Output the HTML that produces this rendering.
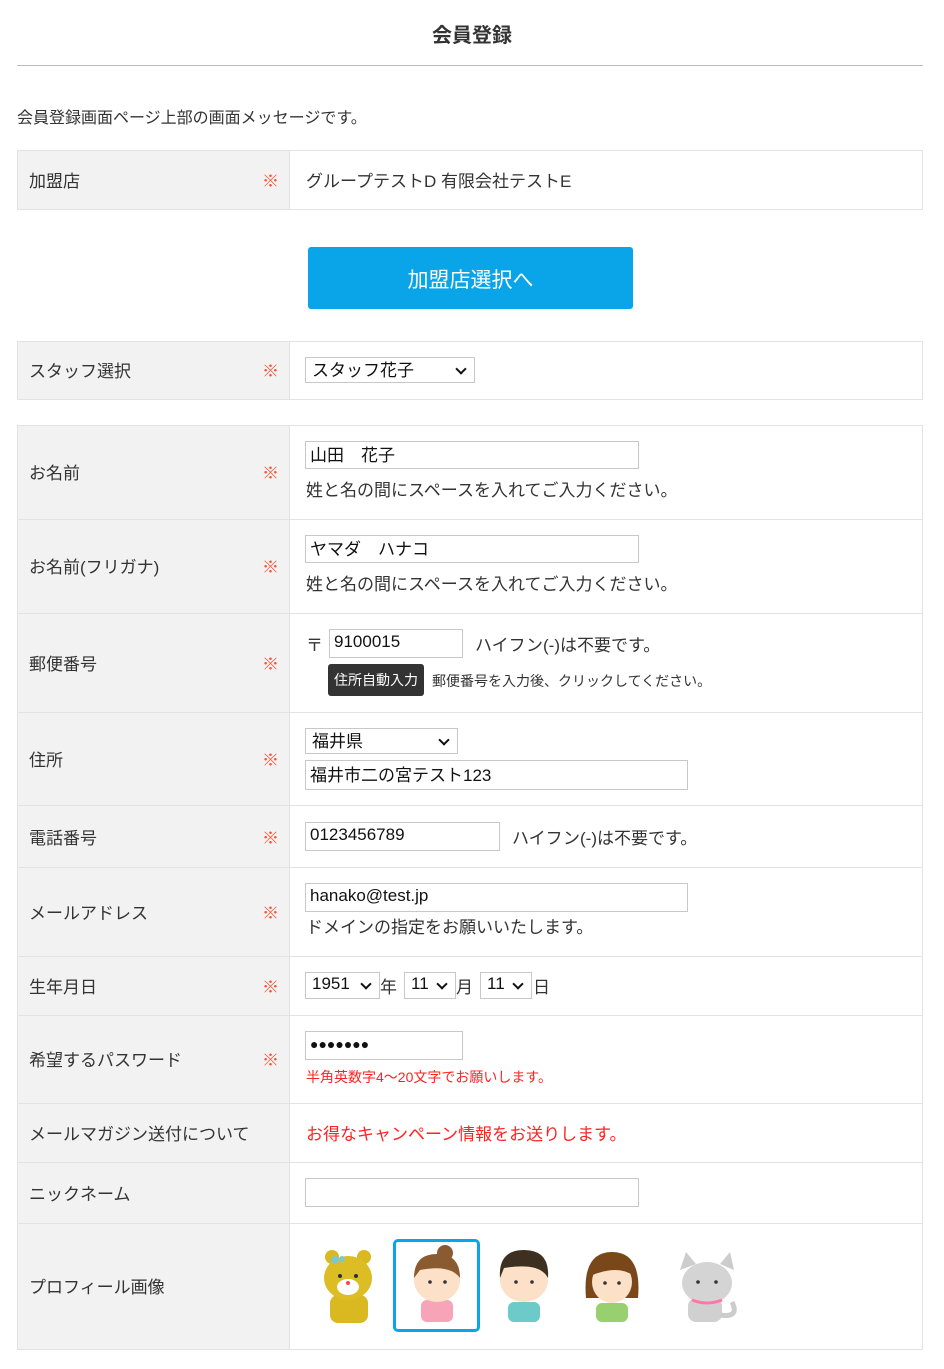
<!DOCTYPE html>
<html><head><meta charset="utf-8"><style>
*{box-sizing:border-box;margin:0;padding:0}
body{width:944px;height:1369px;background:#fff;position:relative;font-family:"Liberation Sans","Noto Sans CJK JP",sans-serif;color:#333;font-size:17px;overflow:hidden}
.a{position:absolute;white-space:nowrap}
.lab{position:absolute;left:17px;width:273px;background:#f2f2f2;border:1px solid #e3e3e3}
.con{position:absolute;left:289px;width:634px;border:1px solid #e3e3e3;background:#fff}
.lt{position:absolute;left:29px;font-size:17px;color:#333;line-height:20px;margin-top:2px}
.req{position:absolute;left:262px;color:#ff4a2a;font-size:17px;line-height:20px;margin-top:2px}
.b,.sel{position:absolute;border:1px solid #c8c8c8;background:#fff;font-size:17px;color:#111;display:flex;align-items:center;padding-bottom:3px}
.b{padding-left:4px}
.sel{padding-left:6px}
.sel:after{content:"";position:absolute;right:9px;top:7px;width:6px;height:6px;border-right:2px solid #111;border-bottom:2px solid #111;transform:rotate(45deg)}
.t{position:absolute;line-height:20px;white-space:nowrap;margin-top:2px}
</style></head><body>
<div class="a" style="left:0;width:944px;text-align:center;top:19px;font-size:20px;font-weight:bold;color:#333">会員登録</div>
<div class="a" style="left:17px;width:906px;top:65px;border-top:1px solid #bbb"></div>
<div class="t" style="left:17px;top:107px;font-size:16px">会員登録画面ページ上部の画面メッセージです。</div>

<div class="lab" style="top:150px;height:60px"></div><div class="con" style="top:150px;height:60px"></div>
<div class="lt" style="top:170px">加盟店</div><div class="req" style="top:170px">※</div>
<div class="t" style="left:306px;top:170px">グループテストD 有限会社テストE</div>

<div class="a" style="left:308px;top:247px;width:325px;height:62px;background:#0aa5e9;border-radius:3px;color:#fff;font-size:21px;text-align:center;line-height:62px;padding-top:3px">加盟店選択へ</div>

<div class="lab" style="top:341px;height:59px"></div><div class="con" style="top:341px;height:59px"></div>
<div class="lt" style="top:360px">スタッフ選択</div><div class="req" style="top:360px">※</div>
<div class="sel" style="left:305px;top:357px;width:170px;height:26px">スタッフ花子</div>

<div class="lab" style="top:425px;height:925px"></div><div class="con" style="top:425px;height:925px"></div>
<div class="a" style="left:17px;width:906px;top:519px;border-top:1px solid #e3e3e3"></div>
<div class="a" style="left:17px;width:906px;top:613px;border-top:1px solid #e3e3e3"></div>
<div class="a" style="left:17px;width:906px;top:712px;border-top:1px solid #e3e3e3"></div>
<div class="a" style="left:17px;width:906px;top:805px;border-top:1px solid #e3e3e3"></div>
<div class="a" style="left:17px;width:906px;top:867px;border-top:1px solid #e3e3e3"></div>
<div class="a" style="left:17px;width:906px;top:956px;border-top:1px solid #e3e3e3"></div>
<div class="a" style="left:17px;width:906px;top:1015px;border-top:1px solid #e3e3e3"></div>
<div class="a" style="left:17px;width:906px;top:1103px;border-top:1px solid #e3e3e3"></div>
<div class="a" style="left:17px;width:906px;top:1162px;border-top:1px solid #e3e3e3"></div>
<div class="a" style="left:17px;width:906px;top:1223px;border-top:1px solid #e3e3e3"></div>

<div class="lt" style="top:462px">お名前</div><div class="req" style="top:462px">※</div>
<div class="b" style="left:305px;top:441px;width:334px;height:28px">山田　花子</div>
<div class="t" style="left:306px;top:479px">姓と名の間にスペースを入れてご入力ください。</div>

<div class="lt" style="top:556px">お名前(フリガナ)</div><div class="req" style="top:556px">※</div>
<div class="b" style="left:305px;top:535px;width:334px;height:28px">ヤマダ　ハナコ</div>
<div class="t" style="left:306px;top:573px">姓と名の間にスペースを入れてご入力ください。</div>

<div class="lt" style="top:653px">郵便番号</div><div class="req" style="top:653px">※</div>
<div class="t" style="left:306px;top:634px">〒</div>
<div class="b" style="left:329px;top:629px;width:134px;height:29px">9100015</div>
<div class="t" style="left:475px;top:634px">ハイフン(-)は不要です。</div>
<div class="a" style="left:328px;top:664px;width:96px;height:32px;background:#333;border-radius:3px;color:#fff;font-size:14px;line-height:32px;text-align:center">住所自動入力</div>
<div class="t" style="left:432px;top:669px;font-size:14px">郵便番号を入力後、クリックしてください。</div>

<div class="lt" style="top:749px">住所</div><div class="req" style="top:749px">※</div>
<div class="sel" style="left:305px;top:728px;width:153px;height:26px">福井県</div>
<div class="b" style="left:305px;top:760px;width:383px;height:30px">福井市二の宮テスト123</div>

<div class="lt" style="top:827px">電話番号</div><div class="req" style="top:827px">※</div>
<div class="b" style="left:305px;top:822px;width:195px;height:29px">0123456789</div>
<div class="t" style="left:512px;top:827px">ハイフン(-)は不要です。</div>

<div class="lt" style="top:902px">メールアドレス</div><div class="req" style="top:902px">※</div>
<div class="b" style="left:305px;top:883px;width:383px;height:29px">hanako@test.jp</div>
<div class="t" style="left:306px;top:916px">ドメインの指定をお願いいたします。</div>

<div class="lt" style="top:976px">生年月日</div><div class="req" style="top:976px">※</div>
<div class="sel" style="left:305px;top:972px;width:75px;height:27px">1951</div>
<div class="t" style="left:380px;top:976px">年</div>
<div class="sel" style="left:404px;top:972px;width:52px;height:27px">11</div>
<div class="t" style="left:456px;top:976px">月</div>
<div class="sel" style="left:480px;top:972px;width:52px;height:27px">11</div>
<div class="t" style="left:533px;top:976px">日</div>

<div class="lt" style="top:1049px">希望するパスワード</div><div class="req" style="top:1049px">※</div>
<div class="b" style="left:305px;top:1031px;width:158px;height:29px;font-size:14px">●●●●●●●</div>
<div class="t" style="left:306px;top:1065px;font-size:14px;color:#f22">半角英数字4～20文字でお願いします。</div>

<div class="lt" style="top:1123px">メールマガジン送付について</div>
<div class="t" style="left:306px;top:1123px;color:#f22">お得なキャンペーン情報をお送りします。</div>

<div class="lt" style="top:1183px">ニックネーム</div>
<div class="b" style="left:305px;top:1178px;width:334px;height:29px"></div>

<div class="lt" style="top:1276px">プロフィール画像</div>
<div class="a" style="left:393px;top:1239px;width:87px;height:93px;border:3px solid #0aa5e9;border-radius:5px"></div>
<svg class="a" style="left:300px;top:1230px" width="460" height="110" viewBox="0 0 460 110">
 <g><circle cx="32" cy="27" r="7" fill="#d9b820"/><circle cx="64" cy="27" r="7" fill="#d9b820"/>
 <rect x="30" y="65" width="38" height="28" rx="8" fill="#d9b820"/>
 <ellipse cx="48" cy="48" rx="24" ry="22" fill="#dcbd24"/><ellipse cx="48" cy="57" rx="11" ry="8" fill="#fff"/>
 <circle cx="40" cy="46" r="2" fill="#234"/><circle cx="56" cy="46" r="2" fill="#234"/><circle cx="48" cy="53" r="2" fill="#f44"/>
 <circle cx="35" cy="30" r="4" fill="#7cc8c8"/><circle cx="42" cy="29" r="3" fill="#7cc8c8"/></g>
 <g><rect x="121" y="70" width="32" height="22" rx="6" fill="#f7a3b8"/><circle cx="145" cy="23" r="8" fill="#8a5a30"/>
 <ellipse cx="137" cy="50" rx="23" ry="22" fill="#fde0c8"/><path d="M114 48 Q114 24 137 24 Q160 24 160 48 Q150 34 120 40 Z" fill="#8a5a30"/>
 <circle cx="130" cy="52" r="1.8" fill="#333"/><circle cx="145" cy="52" r="1.8" fill="#333"/></g>
 <g><rect x="208" y="72" width="32" height="20" rx="6" fill="#6ccac8"/>
 <ellipse cx="224" cy="50" rx="24" ry="22" fill="#fde0c8"/><path d="M200 48 Q198 20 224 20 Q250 20 248 48 Q240 32 204 38 Z" fill="#3e3020"/>
 <circle cx="216" cy="52" r="1.8" fill="#333"/><circle cx="232" cy="52" r="1.8" fill="#333"/></g>
 <g><rect x="296" y="73" width="32" height="19" rx="6" fill="#98d070"/>
 <path d="M286 68 Q282 22 312 22 Q342 22 338 68 Z" fill="#7a4818"/>
 <ellipse cx="312" cy="52" rx="20" ry="21" fill="#fde0c8"/><path d="M290 46 Q296 28 312 28 Q330 28 334 46 Q318 34 290 46Z" fill="#7a4818"/>
 <circle cx="305" cy="53" r="1.8" fill="#333"/><circle cx="319" cy="53" r="1.8" fill="#333"/></g>
 <g><path d="M380 40 L386 22 L396 34 Z M420 34 L430 22 L434 40Z" fill="#ccc"/>
 <rect x="388" y="68" width="34" height="24" rx="8" fill="#d0d0d0"/><path d="M420 85 Q440 88 432 72" stroke="#ccc" stroke-width="5" fill="none"/>
 <ellipse cx="407" cy="53" rx="25" ry="21" fill="#d4d4d4"/><path d="M392 70 Q407 76 422 70" stroke="#f7a" stroke-width="3" fill="none"/>
 <circle cx="398" cy="52" r="1.8" fill="#333"/><circle cx="416" cy="52" r="1.8" fill="#333"/></g>
</svg>
</body></html>
